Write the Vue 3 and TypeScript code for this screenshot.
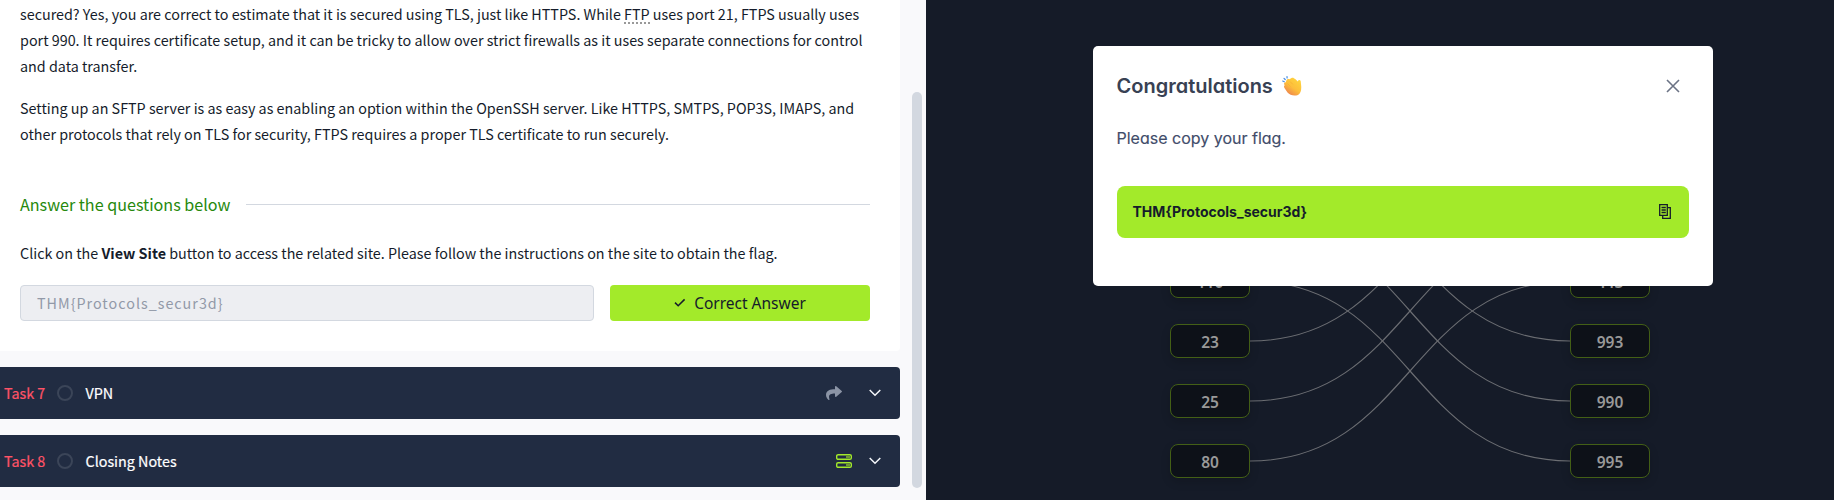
<script setup lang="ts">
interface Port { label: string; y: number }
interface Link { from: number; to: number }

const leftPorts: Port[] = [
  { label: '110', y: 281 }, { label: '23', y: 341 }, { label: '25', y: 401 }, { label: '80', y: 461 },
]
const rightPorts: Port[] = [
  { label: '443', y: 281 }, { label: '993', y: 341 }, { label: '990', y: 401 }, { label: '995', y: 461 },
]
const links: Link[] = [
  { from: 161, to: 341 }, { from: 221, to: 401 }, { from: 281, to: 461 },
  { from: 341, to: 161 }, { from: 401, to: 221 }, { from: 461, to: 281 },
]
const tasks = [
  { id: 7, title: 'VPN', icon: 'share' },
  { id: 8, title: 'Closing Notes', icon: 'server' },
]
const curve = (l: Link): string => `M324 ${l.from}C484 ${l.from} 484 ${l.to} 644 ${l.to}`
</script>

<template>
  <div class="page">
    <main class="room">
      <section class="content">
        <div class="prose">
          <p><span class="ln">secured? Yes, you are correct to estimate that it is secured using TLS, just like HTTPS. While <abbr>FTP</abbr> uses port 21, FTPS usually uses</span><span class="ln">port 990. It requires certificate setup, and it can be tricky to allow over strict firewalls as it uses separate connections for control</span><span class="ln">and data transfer.</span></p>
          <p><span class="ln">Setting up an SFTP server is as easy as enabling an option within the OpenSSH server. Like HTTPS, SMTPS, POP3S, IMAPS, and</span><span class="ln">other protocols that rely on TLS for security, FTPS requires a proper TLS certificate to run securely.</span></p>
        </div>
        <div class="heading"><h3>Answer the questions below</h3><hr></div>
        <p class="question">Click on the <b>View Site</b> button to access the related site. Please follow the instructions on the site to obtain the flag.</p>
        <div class="answer">
          <div class="field">THM{Protocols_secur3d}</div>
          <button class="correct">
            <svg width="12" height="10" viewBox="0 0 12 10"><path d="M1 4.6 4.2 7.8 10.6 1.4" fill="none" stroke="#151c2b" stroke-width="1.5" /></svg>
            Correct Answer
          </button>
        </div>
      </section>
      <section v-for="t in tasks" :key="t.id" class="task">
        <span class="num">Task {{ t.id }}</span>
        <span class="ring"></span>
        <span class="title">{{ t.title }}</span>
        <svg v-if="t.icon === 'share'" class="share" width="16" height="16" viewBox="0 0 512 512"><path fill="#8b94a5" d="M503.700 226.200l-176 151.100c-15.400 13.300-39.700 2.500-39.700-18.160V272.100C132.900 274.300 66.060 312.800 111.400 457.800c5.031 16.090-14.410 28.560-28.060 18.620C39.590 444.600 0 383.800 0 322.300c0-152.200 127.400-184.400 288-186.300V56.020c0-20.670 24.280-31.460 39.700-18.160l176 151.100C514.800 199.400 514.800 216.600 503.700 226.200z" /></svg>
        <svg v-else class="server" width="16" height="14" viewBox="0 0 16 14"><g fill="none" stroke="#a3ea2a" stroke-width="1.4"><rect x=".7" y=".7" width="14.600" height="4.600" rx="1.4" /><rect x=".7" y="8.700" width="14.600" height="4.600" rx="1.4" /></g><g fill="#6d9a34"><rect x="10" y="2" width="4" height="2" /><rect x="10" y="10" width="4" height="2" /></g></svg>
        <svg class="chev" width="12" height="8" viewBox="0 0 12 8"><path d="M.7 1 6 6.300 11.300 1" fill="none" stroke="#f4f6fa" stroke-width="1.5" /></svg>
      </section>
      <div class="scroll"></div>
    </main>

    <aside class="site">
      <svg class="links" width="908" height="500" viewBox="0 0 908 500">
        <path v-for="l in links" :key="l.from" :d="curve(l)" />
      </svg>
      <div v-for="p in leftPorts" :key="p.label" class="port left" :style="{ top: p.y - 17 + 'px' }">{{ p.label }}</div>
      <div v-for="p in rightPorts" :key="p.label" class="port right" :style="{ top: p.y - 17 + 'px' }">{{ p.label }}</div>

      <div class="modal">
        <header>
          <h2>Congratulations</h2>
          <svg class="clap" width="20" height="20" viewBox="0 0 20 20">
            <defs><linearGradient id="skin" x1="1" y1="0" x2=".3" y2="1"><stop offset="0" stop-color="#ffda3e" /><stop offset=".6" stop-color="#fdbe3b" /><stop offset="1" stop-color="#ed824f" /></linearGradient></defs>
            <path d="M2.200 8.300C1.800 7 2.800 6 3.800 6.500L4.300 4.500C4.800 3 6.300 2.600 7.500 3.200L9.500 1.900C10.800 1.300 12 1.900 13.500 3.300L15.800 5.500 16.200 4.600C16.800 3.600 18.300 4 18.700 5L19.200 10C19.500 14 18.700 17.500 16 18.900 12 20.200 8 19.200 5.500 16.500L2.800 12.500C1.900 11.300 1.600 9.800 2.700 9.500Z" fill="url(#skin)" />
            <path d="M5.500 7.500 8.500 10.500M8 5.500 11 8.500" stroke="#f3ad32" stroke-width=".7" fill="none" />
            <path d="M.7 5 2.300 5.700M2 2.300 3.200 3.500M5 .6 5.100 2" stroke="#438be2" stroke-width="1.2" stroke-linecap="round" />
          </svg>
          <svg class="close" width="14" height="14" viewBox="0 0 14 14"><path d="M1 1 13 13M13 1 1 13" stroke="#6b7385" stroke-width="1.600" /></svg>
        </header>
        <p>Please copy your flag.</p>
        <div class="flag">
          <span>THM{Protocols_secur3d}</span>
          <svg width="12" height="16" viewBox="0 0 12 16"><path d="M.7.700H8.300V11.300H.7ZM9 3.700H11.300V14.300H3.700V12M2.500 3.500H6.800M2.500 6H6.800M2.500 8.500H6.800" fill="none" stroke="#151c2b" stroke-width="1.300" /></svg>
        </div>
      </div>
    </aside>
  </div>
</template>

<style>
body { margin: 0; overflow: hidden; }
</style>
<style scoped>
* { box-sizing: border-box; }
.page { display: flex; width: 1834px; height: 500px; overflow: hidden; }
.room { position: relative; width: 926px; background: #f9f9fb; font: 14.33px/26px "Noto Sans CJK SC", sans-serif; color: #151c2b; white-space: nowrap; }
.content { width: 900px; height: 351px; background: #fff; border-radius: 0 0 4px 0; padding: 1px 30px 0 20px; }
.prose { height: 177px; }
p { margin: 0 0 16px; }
.ln { display: block; }
abbr { border-bottom: 2px dotted #999; display: inline-block; line-height: 17px; }
.heading { display: flex; align-items: center; height: 52px; }
h3 { margin: 0; font-size: 16.13px; font-weight: 400; color: #26890d; width: 226px; }
hr { flex: 1; margin: 0; border: 0; height: 1px; background: #d3d8e0; }
.question { margin: 10px 0 19px; }
.answer { display: flex; gap: 16px; }
.field { width: 574px; height: 36px; border: 1px solid #d3d8e0; border-radius: 4px; background: #edeef2; color: #9299a8; padding-left: 16px; line-height: 34px; letter-spacing: 1px; }
.correct { flex: 1; height: 36px; border: 0; border-radius: 4px; background: #a3ea2a; font: 15.5px "Noto Sans", sans-serif; color: #151c2b; display: flex; align-items: center; justify-content: center; gap: 8px; padding: 0; }
.task { width: 900px; height: 52px; margin-top: 16px; background: #212c42; border-radius: 0 4px 4px 0; display: flex; align-items: center; padding: 0 19px 0 4px; color: #fff; }
.num { color: #ff5367; width: 53px; -webkit-text-stroke: .2px #ff5367; }
.ring { width: 16px; height: 16px; border: 2px solid #3b4558; border-radius: 50%; margin-right: 12.5px; }
.title { flex: 1; -webkit-text-stroke: .2px #fff; }
.share { margin-right: 27px; }
.server { margin-right: 17px; }
.scroll { position: absolute; left: 912px; top: 92px; width: 10px; height: 396px; border-radius: 5px; background: #d3d8e0; }
.site { position: relative; flex: 1; background: #151b28; }
.links { position: absolute; inset: 0; fill: none; stroke: #6b6d72; stroke-width: 1.15; }
.port { position: absolute; width: 80px; height: 34px; border: 1px solid #435f16; border-radius: 8px; background: #0d1118; color: #999; font: 600 15.5px/34px "Noto Sans", sans-serif; text-align: center; box-shadow: 0 4px 10px rgba(0,0,0,.15); }
.left { left: 244px; }
.right { left: 644px; }
.modal { position: absolute; left: 167px; top: 46px; width: 620px; height: 240px; background: #fff; border-radius: 5px; padding: 24px; font-family: Inter, sans-serif; font-feature-settings: "cv11"; }
header { display: flex; align-items: center; height: 32px; }
h2 { margin: 0 0 0 -.5px; width: 165.5px; font-size: 20px; font-weight: 600; color: #384153; }
.close { margin-left: auto; margin-right: 9px; }
.modal p { margin: 24px 0 35px -.5px; height: 25px; line-height: 25px; font-size: 16px; font-weight: 400; color: #414c6a; -webkit-text-stroke: .15px #414c6a; }
.flag { height: 52px; background: #a3ea2a; border-radius: 8px; display: flex; align-items: center; justify-content: space-between; padding: 0 18px 0 15.5px; font-size: 14px; line-height: 17px; font-weight: 700; color: #151c2b; }
.flag span { margin-bottom: 1px; }
</style>
